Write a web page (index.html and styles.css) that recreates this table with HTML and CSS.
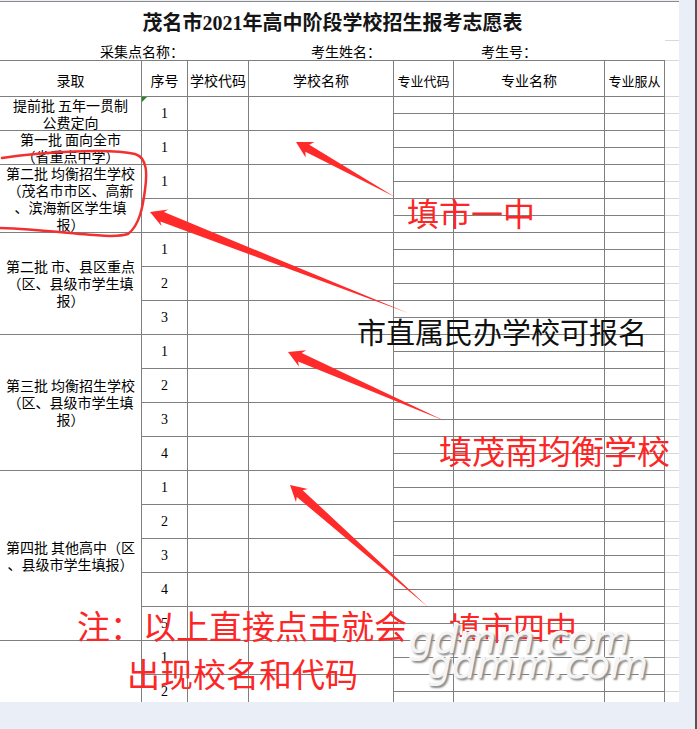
FILE: index.html
```html
<!DOCTYPE html>
<html lang="zh-CN">
<head>
<meta charset="utf-8">
<title>茂名市2021年高中阶段学校招生报考志愿表</title>
<link rel="stylesheet" href="styles.css">
</head>
<body>
<div class="page">
  <div class="sheet">
    <div class="title">
      <div class="title-text">茂名市2021年高中阶段学校招生报考志愿表</div>
      <div class="title-x"></div>
    </div>
    <div class="info">
      <span>采集点名称：</span>
      <span>考生姓名：</span>
      <span>考生号：</span>
    </div>
    <div class="grid">
      <div class="h l">录取</div><div class="h n">序号</div><div class="h c">学校代码</div><div class="h m">学校名称</div><div class="h p sm">专业代码</div><div class="h q">专业名称</div><div class="h r sm">专业服从</div><div class="h x"></div>

      <div class="l s2"><span>提前批 五年一贯制<br>公费定向</span></div><div class="n"><i class="flag"></i>1</div><div class="c"></div><div class="m"></div><div class="p"></div><div class="q"></div><div class="r"></div><div class="x"></div>
      <div class="p"></div><div class="q"></div><div class="r"></div><div class="x"></div>

      <div class="l s2"><span>第一批 面向全市<br>（省重点中学）</span></div><div class="n">1</div><div class="c"></div><div class="m"></div><div class="p"></div><div class="q"></div><div class="r"></div><div class="x"></div>
      <div class="p"></div><div class="q"></div><div class="r"></div><div class="x"></div>

      <div class="l s4"><span>第二批 均衡招生学校<br>（茂名市市区、高新<br>、滨海新区学生填<br>报）</span></div><div class="n">1</div><div class="c"></div><div class="m"></div><div class="p"></div><div class="q"></div><div class="r"></div><div class="x"></div>
      <div class="p"></div><div class="q"></div><div class="r"></div><div class="x"></div>
      <div class="n"></div><div class="c"></div><div class="m"></div><div class="p"></div><div class="q"></div><div class="r"></div><div class="x"></div>
      <div class="p"></div><div class="q"></div><div class="r"></div><div class="x"></div>

      <div class="l s6"><span>第二批 市、县区重点<br>（区、县级市学生填<br>报）</span></div><div class="n">1</div><div class="c"></div><div class="m"></div><div class="p"></div><div class="q"></div><div class="r"></div><div class="x"></div>
      <div class="p"></div><div class="q"></div><div class="r"></div><div class="x"></div>
      <div class="n">2</div><div class="c"></div><div class="m"></div><div class="p"></div><div class="q"></div><div class="r"></div><div class="x"></div>
      <div class="p"></div><div class="q"></div><div class="r"></div><div class="x"></div>
      <div class="n">3</div><div class="c"></div><div class="m"></div><div class="p"></div><div class="q"></div><div class="r"></div><div class="x"></div>
      <div class="p"></div><div class="q"></div><div class="r"></div><div class="x"></div>

      <div class="l s8"><span>第三批 均衡招生学校<br>（区、县级市学生填<br>报）</span></div><div class="n">1</div><div class="c"></div><div class="m"></div><div class="p"></div><div class="q"></div><div class="r"></div><div class="x"></div>
      <div class="p"></div><div class="q"></div><div class="r"></div><div class="x"></div>
      <div class="n">2</div><div class="c"></div><div class="m"></div><div class="p"></div><div class="q"></div><div class="r"></div><div class="x"></div>
      <div class="p"></div><div class="q"></div><div class="r"></div><div class="x"></div>
      <div class="n">3</div><div class="c"></div><div class="m"></div><div class="p"></div><div class="q"></div><div class="r"></div><div class="x"></div>
      <div class="p"></div><div class="q"></div><div class="r"></div><div class="x"></div>
      <div class="n">4</div><div class="c"></div><div class="m"></div><div class="p"></div><div class="q"></div><div class="r"></div><div class="x"></div>
      <div class="p"></div><div class="q"></div><div class="r"></div><div class="x"></div>

      <div class="l s10"><span>第四批 其他高中（区<br>、县级市学生填报）</span></div><div class="n">1</div><div class="c"></div><div class="m"></div><div class="p"></div><div class="q"></div><div class="r"></div><div class="x"></div>
      <div class="p"></div><div class="q"></div><div class="r"></div><div class="x"></div>
      <div class="n">2</div><div class="c"></div><div class="m"></div><div class="p"></div><div class="q"></div><div class="r"></div><div class="x"></div>
      <div class="p"></div><div class="q"></div><div class="r"></div><div class="x"></div>
      <div class="n">3</div><div class="c"></div><div class="m"></div><div class="p"></div><div class="q"></div><div class="r"></div><div class="x"></div>
      <div class="p"></div><div class="q"></div><div class="r"></div><div class="x"></div>
      <div class="n">4</div><div class="c"></div><div class="m"></div><div class="p"></div><div class="q"></div><div class="r"></div><div class="x"></div>
      <div class="p"></div><div class="q"></div><div class="r"></div><div class="x"></div>
      <div class="n">5</div><div class="c"></div><div class="m"></div><div class="p"></div><div class="q"></div><div class="r"></div><div class="x"></div>
      <div class="p"></div><div class="q"></div><div class="r"></div><div class="x"></div>

      <div class="l s6"></div><div class="n">1</div><div class="c"></div><div class="m"></div><div class="p"></div><div class="q"></div><div class="r"></div><div class="x"></div>
      <div class="p"></div><div class="q"></div><div class="r"></div><div class="x"></div>
      <div class="n">2</div><div class="c"></div><div class="m"></div><div class="p"></div><div class="q"></div><div class="r"></div><div class="x"></div>
      <div class="p"></div><div class="q"></div><div class="r"></div><div class="x"></div>
      <div class="n">3</div><div class="c"></div><div class="m"></div><div class="p"></div><div class="q"></div><div class="r"></div><div class="x"></div>
      <div class="p"></div><div class="q"></div><div class="r"></div><div class="x"></div>
    </div>
  </div>
  <div class="strip"></div>
</div>

<div class="overlay">
  <svg class="marks" width="697" height="729" viewBox="0 0 697 729">
    <path class="loop" d="M2,158 C40,152 110,148 135,154 C148,158 147,175 145,190 C143,205 140,225 128,234 C110,240 60,230 0,228"/>
    <polygon class="arrow" points="296,142 314.4,141.9 309.3,144.8 395,197 305.4,151.8 305.6,157.6"/>
    <polygon class="arrow" points="150,212 168.2,209.5 163.9,212.1 408,313 160.3,221.4 161.6,226.2"/>
    <polygon class="arrow" points="288,352 306.3,350.2 301.7,353.1 445,421 298.1,361.4 299,366.7"/>
    <polygon class="arrow" points="290,485 307.9,488.9 302.7,490.2 428,607 296.8,497 296,502.3"/>
  </svg>
  <div class="ann red a1">填市一中</div>
  <div class="ann black a2">市直属民办学校可报名</div>
  <div class="ann red a3">填茂南均衡学校</div>
  <div class="ann red a4">注：以上直接点击就会</div>
  <div class="ann red a5">填市四中</div>
  <div class="ann red a6">出现校名和代码</div>
  <div class="wm w1">gdmm.com</div>
  <div class="wm w2">gdmm.com</div>
</div>
</body>
</html>
```
FILE: styles.css
```css
* { box-sizing: border-box; }
html, body { margin: 0; padding: 0; }
body {
  width: 697px;
  height: 729px;
  overflow: hidden;
  position: relative;
  background: #eaeef6;
  font-family: "Noto Sans CJK SC", sans-serif;
  color: #000;
}
.page { display: flex; height: 729px; }
.sheet {
  flex: none;
  width: 679px;
  height: 701px;
  margin-top: 1px;
  border-top: 1px solid #8a8a8a;
  background: #fff;
  overflow: hidden;
}
.strip { flex: 1; border-right: 2px solid #555; }

.title { display: grid; grid-template-columns: 665px 14px; height: 39px; }
.title-text {
  display: flex;
  align-items: center;
  justify-content: center;
  font-family: "Liberation Serif", "Noto Sans CJK SC", serif;
  font-weight: 700;
  font-size: 20px;
  color: #151515;
}
.title-x { border-bottom: 1px solid #d9d9d9; }

.info { display: flex; height: 19px; padding-left: 100px; padding-top: 1px; font-size: 14px; line-height: 19px; }
.info span:nth-child(1) { width: 211px; }
.info span:nth-child(2) { width: 170px; }

.grid {
  display: grid;
  grid-template-columns: 142px 46px 61px 145px 60px 151px 60px 14px;
  grid-template-rows: 37px;
  grid-auto-rows: 17px;
  font-size: 14px;
  line-height: 17px;
}
.grid > div {
  position: relative;
  display: flex;
  align-items: center;
  justify-content: center;
  text-align: center;
  white-space: nowrap;
  border-right: 1px solid #7f7f7f;
  border-bottom: 1px solid #7f7f7f;
}
.grid > .x { border-right: 0; border-bottom-color: #d9d9d9; }
.grid > .h { border-top: 1px solid #7f7f7f; padding-top: 3px; }
.grid > .h.x { border-top-color: #d9d9d9; }
.grid > .sm { font-size: 13px; }

.l { grid-column: 1; }
.n { grid-column: 2; grid-row: span 2; font-family: "Liberation Serif", serif; }
.h.n { font-family: "Noto Sans CJK SC", sans-serif; grid-row: auto; }
.c { grid-column: 3; grid-row: span 2; }
.m { grid-column: 4; grid-row: span 2; }
.h.c, .h.m { grid-row: auto; }
.p { grid-column: 5; }
.q { grid-column: 6; }
.r { grid-column: 7; }
.x { grid-column: 8; }
.s2 { grid-row: span 2; }
.s4 { grid-row: span 4; }
.s6 { grid-row: span 6; }
.s8 { grid-row: span 8; }
.s10 { grid-row: span 10; }

.flag {
  position: absolute;
  left: 0;
  top: 0;
  width: 0;
  height: 0;
  border-top: 5px solid #1e8c1e;
  border-right: 5px solid transparent;
}

.overlay { position: absolute; left: 0; top: 0; width: 697px; height: 729px; pointer-events: none; }
.marks { position: absolute; left: 0; top: 0; }
.loop { fill: none; stroke: #f23030; stroke-width: 2.5; stroke-linecap: round; }
.arrow { fill: #ff2b2b; }

.ann { position: absolute; font-family: "Noto Sans CJK SC", sans-serif; line-height: 1; white-space: nowrap; }
.red { color: #fc2626; }
.black { color: #111; }
.a1 { left: 407px; top: 196px; font-size: 32px; }
.a2 { left: 357px; top: 317px; font-size: 29px; }
.a3 { left: 439px; top: 434px; font-size: 33px; }
.a4 { left: 77px; top: 609px; font-size: 33px; }
.a5 { left: 449px; top: 610px; font-size: 32px; }
.a6 { left: 127px; top: 657px; font-size: 33px; }

.wm {
  position: absolute;
  font-family: "DejaVu Sans", sans-serif;
  font-style: italic;
  font-size: 39px;
  line-height: 39px;
  color: #f4f4f4;
  text-shadow: 2px 2px 2px #8a8a8a, -1px -1px 0 #ffffff;
  white-space: nowrap;
}
.w1 { left: 409px; top: 620px; }
.w2 { left: 427px; top: 645px; }
```
